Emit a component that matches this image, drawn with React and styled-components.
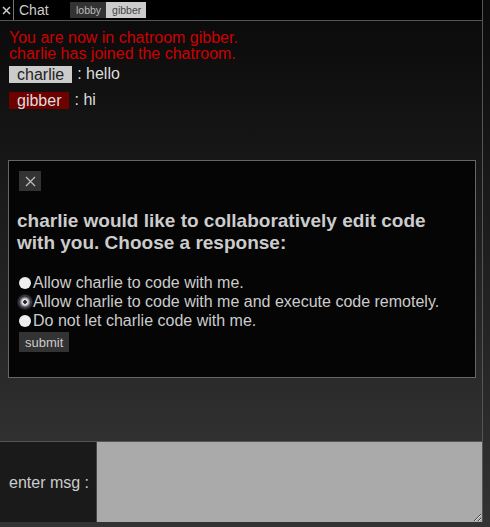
import { useState } from 'react'
import styled, { createGlobalStyle } from 'styled-components'

const GlobalStyle = createGlobalStyle`
  html, body {
    margin: 0;
    padding: 0;
  }
  body {
    min-height: 100vh;
    background: linear-gradient(#0b0b0b, #333);
    font-family: "Liberation Sans", Arial, sans-serif;
    color: #ddd;
  }
`

const Shell = styled.div`
  width: 482px;
  height: 522px;
  border-right: 1px solid #555;
  display: flex;
  flex-direction: column;
`

const Header = styled.div`
  height: 20px;
  background: #000;
  border-bottom: 1px solid #555;
  display: flex;
  align-items: center;
  font-size: 14px;
  color: #ccc;
`

const CloseX = styled.span`
  width: 14px;
  height: 20px;
  border-right: 1px solid #777;
  display: flex;
  align-items: center;
  justify-content: center;
  box-sizing: border-box;
`

const Title = styled.span`
  margin-left: 5px;
  width: 51px;
`

const Tabs = styled.div`
  display: flex;
  height: 16px;
`

const Tab = styled.span`
  display: flex;
  align-items: center;
  padding: 0 5px 0 6px;
  font-size: 10.5px;
  background: ${p => (p.$active ? '#ccc' : '#333')};
  color: ${p => (p.$active ? '#444' : '#bbb')};
`

const Messages = styled.div`
  flex: 1;
  padding: 9px 8px 0;
  background: linear-gradient(#0b0b0b, #303030);
  font-size: 16px;
`

const Notice = styled.div`
  color: #c00;
  line-height: 16px;
  padding-left: 1px;
`

const Line = styled.div`
  display: flex;
  align-items: center;
  margin-top: ${p => p.$gap}px;
  padding-left: 1px;
`

const Nick = styled.span`
  display: inline-block;
  padding: 0 8px;
  line-height: 17px;
  background: ${p => (p.$self ? '#ccc' : '#6e0000')};
  color: ${p => (p.$self ? '#222' : '#ddd')};
`

const Text = styled.span`
  margin-left: 5px;
  color: #ddd;
`

const Dialog = styled.div`
  margin-top: 51px;
  width: 466px;
  height: 216px;
  border: 1px solid #666;
  background: #050505;
`

const DialogInner = styled.div`
  padding: 10px 8px 0;
`

const CloseButton = styled.button`
  width: 22px;
  height: 20px;
  margin-left: 2px;
  padding: 0;
  border: none;
  background: #333;
  display: flex;
  align-items: center;
  justify-content: center;
`

const Question = styled.h3`
  margin: 19px 0 19px;
  font-size: 19px;
  font-weight: bold;
  line-height: 22px;
  color: #ccc;
`

const Options = styled.div`
  display: flex;
  flex-direction: column;
`

const Option = styled.label`
  display: flex;
  align-items: center;
  height: 19px;
  color: #ccc;
  font-size: 16px;
`

const Radio = styled.input`
  appearance: none;
  margin: 0 2px;
  width: 12px;
  height: 12px;
  border-radius: 50%;
  background: #eee;
  &:checked {
    background: radial-gradient(circle, #222 0 1.5px, #ddd 2px 3px, #778 4.5px, #334 6px);
    box-shadow: 0 0 2px 1px #556;
  }
`

const Submit = styled.button`
  margin: 2px 0 0 2px;
  height: 20px;
  padding: 0 6px;
  border: none;
  background: #333;
  color: #ccc;
  font-family: inherit;
  font-size: 13px;
  align-self: flex-start;
`

const InputRow = styled.div`
  height: 80px;
  border-top: 1px solid #555;
  display: flex;
`

const Label = styled.div`
  width: 96px;
  background: #1a1a1a;
  color: #ccc;
  font-size: 16px;
  display: flex;
  align-items: center;
  padding: 2px 0 0 9px;
  box-sizing: border-box;
`

const MsgInput = styled.textarea`
  flex: 1;
  margin: 0;
  border: none;
  border-left: 1px solid #444;
  background: #aaa;
  outline: none;
  resize: both;
`

const options = [
  'Allow charlie to code with me.',
  'Allow charlie to code with me and execute code remotely.',
  'Do not let charlie code with me.',
]

export default function App() {
  const [choice, setChoice] = useState(1)
  return (
    <>
      <GlobalStyle />
      <Shell>
        <Header>
          <CloseX>
            <svg width="9" height="9" viewBox="0 0 9 9">
              <path d="M1 1L8 8M8 1L1 8" stroke="#ccc" strokeWidth="1.5" />
            </svg>
          </CloseX>
          <Title>Chat</Title>
          <Tabs>
            <Tab>lobby</Tab>
            <Tab $active>gibber</Tab>
          </Tabs>
        </Header>
        <Messages>
          <Notice>You are now in chatroom gibber.</Notice>
          <Notice>charlie has joined the chatroom.</Notice>
          <Line $gap={3}>
            <Nick $self>charlie</Nick>
            <Text>: hello</Text>
          </Line>
          <Line $gap={8}>
            <Nick>gibber</Nick>
            <Text>: hi</Text>
          </Line>
          <Dialog>
            <DialogInner>
              <CloseButton>
                <svg width="11" height="11" viewBox="0 0 11 11">
                  <path d="M1 1L10 10M10 1L1 10" stroke="#bbb" strokeWidth="1.3" />
                </svg>
              </CloseButton>
              <Question>
                charlie would like to collaboratively edit code with you. Choose a response:
              </Question>
              <Options>
                {options.map((o, i) => (
                  <Option key={i}>
                    <Radio
                      type="radio"
                      name="response"
                      checked={choice === i}
                      onChange={() => setChoice(i)}
                    />
                    {o}
                  </Option>
                ))}
                <Submit>submit</Submit>
              </Options>
            </DialogInner>
          </Dialog>
        </Messages>
        <InputRow>
          <Label>enter msg :</Label>
          <MsgInput />
        </InputRow>
      </Shell>
    </>
  )
}
